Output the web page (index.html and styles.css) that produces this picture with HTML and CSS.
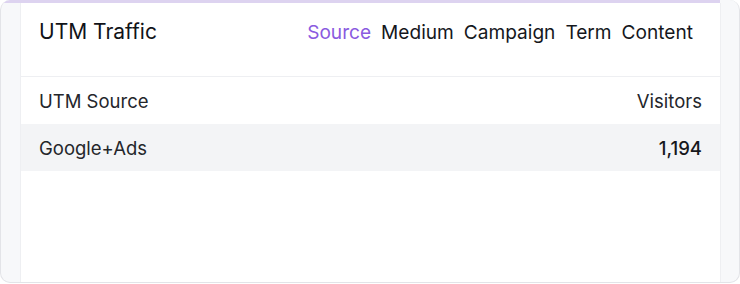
FILE: index.html
```html
<!DOCTYPE html>
<html lang="en">
<head>
    <meta charset="UTF-8">
    <meta name="viewport" content="width=device-width, initial-scale=1.0">
    <title>UTM Traffic</title>
    <link rel="stylesheet" href="styles.css">
</head>
<body>
    <!-- outer frame -->
    <div class="frame">
        <div class="top-glow"></div>

        <!-- white card -->
        <section class="card">
            <header class="card-header">
                <h2 class="card-title">UTM Traffic</h2>
                <nav class="tabs">
                    <a href="#source" class="tab active">Source</a>
                    <a href="#medium" class="tab">Medium</a>
                    <a href="#campaign" class="tab">Campaign</a>
                    <a href="#term" class="tab">Term</a>
                    <a href="#content" class="tab">Content</a>
                </nav>
            </header>

            <div class="table">
                <div class="row head">
                    <span>UTM Source</span>
                    <span>Visitors</span>
                </div>
                <div class="row striped">
                    <span>Google+Ads</span>
                    <span class="num">1,194</span>
                </div>
            </div>
        </section>
    </div>
</body>
</html>
```

FILE: styles.css
```css
* {
    margin: 0;
    padding: 0;
    box-sizing: border-box;
}

body {
    font-family: Inter, "Liberation Sans", sans-serif;
    background-color: white;
    width: 740px;
    height: 284px;
    overflow: hidden;
}

/* outer gray frame */
.frame {
    height: 283px;
    border: 1px solid #e3e4e8;
    border-top: none;
    border-radius: 10px;
    background-color: #f7f8fa;
    display: flex;
    flex-direction: column;
    overflow: hidden;
}

/* lavender line at the very top */
.top-glow {
    height: 3px;
    margin-right: 19px;
    background-color: #ddd3f0;
}

.card {
    flex: 1;
    margin: 0 18px 0 19px;
    background-color: white;
    border-left: 1px solid #eeeff2;
    border-right: 1px solid #eeeff2;
}

.card-header {
    height: 74px;
    display: flex;
    align-items: flex-start;
    justify-content: space-between;
    padding: 16px 27px 0 18px;
    border-bottom: 1px solid #eeeff2;
}

.card-title {
    font-size: 21px;
    font-weight: 400;
    color: #111318;
    line-height: 26px;
}

.tabs {
    display: flex;
    gap: 10px;
}

.tab {
    font-size: 19.1px;
    font-weight: 400;
    color: #15171c;
    text-decoration: none;
    line-height: 26px;
}

.tab.active {
    color: #8a5ae0;
}

.row {
    height: 47px;
    display: flex;
    align-items: center;
    justify-content: space-between;
    padding: 0 18px 0 18px;
    font-size: 18.5px;
    color: #24262b;
}

.row.striped {
    background-color: #f3f4f6;
}

.num {
    font-weight: 500;
    color: #16181d;
}
```
